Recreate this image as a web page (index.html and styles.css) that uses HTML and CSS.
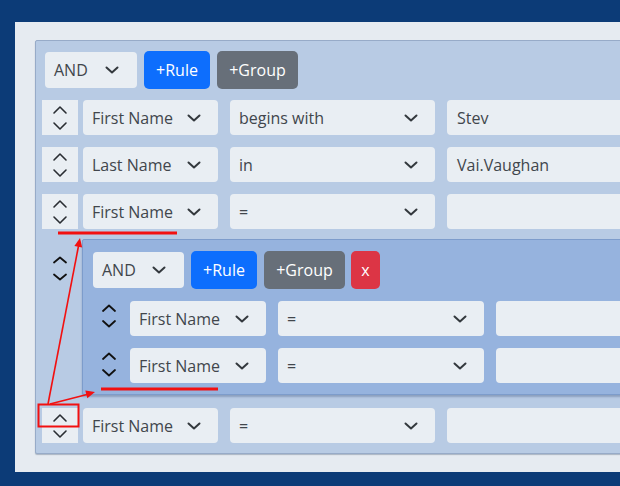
FILE: index.html
```html
<!DOCTYPE html>
<html>
<head>
<meta charset="utf-8">
<link rel="stylesheet" href="styles.css">
</head>
<body>
<div class="card">
  <div class="group">
    <div class="group-header">
      <div class="select combinator"><span>AND</span><svg class="chev" width="14" height="8" viewBox="0 0 14 8"><path d="M1.5 1.5l5.5 5 5.5-5"/></svg></div>
      <button class="btn btn-rule">+Rule</button>
      <button class="btn btn-group">+Group</button>
    </div>
    <div class="rules">
      <div class="rule">
        <div class="handle boxed"><svg width="36" height="35" viewBox="0 0 36 35"><path d="M12 13l6-6 6 6M12 23l6 6 6-6"/></svg></div>
        <div class="fields">
          <div class="select field"><span>First Name</span><svg class="chev" width="14" height="8" viewBox="0 0 14 8"><path d="M1.5 1.5l5.5 5 5.5-5"/></svg></div>
          <div class="select op"><span>begins with</span><svg class="chev" width="14" height="8" viewBox="0 0 14 8"><path d="M1.5 1.5l5.5 5 5.5-5"/></svg></div>
          <div class="value">Stev</div>
        </div>
      </div>
      <div class="rule">
        <div class="handle boxed"><svg width="36" height="35" viewBox="0 0 36 35"><path d="M12 13l6-6 6 6M12 23l6 6 6-6"/></svg></div>
        <div class="fields">
          <div class="select field"><span>Last Name</span><svg class="chev" width="14" height="8" viewBox="0 0 14 8"><path d="M1.5 1.5l5.5 5 5.5-5"/></svg></div>
          <div class="select op"><span>in</span><svg class="chev" width="14" height="8" viewBox="0 0 14 8"><path d="M1.5 1.5l5.5 5 5.5-5"/></svg></div>
          <div class="value">Vai.Vaughan</div>
        </div>
      </div>
      <div class="rule">
        <div class="handle boxed"><svg width="36" height="35" viewBox="0 0 36 35"><path d="M12 13l6-6 6 6M12 23l6 6 6-6"/></svg></div>
        <div class="fields">
          <div class="select field"><span>First Name</span><svg class="chev" width="14" height="8" viewBox="0 0 14 8"><path d="M1.5 1.5l5.5 5 5.5-5"/></svg></div>
          <div class="select op"><span>=</span><svg class="chev" width="14" height="8" viewBox="0 0 14 8"><path d="M1.5 1.5l5.5 5 5.5-5"/></svg></div>
          <div class="value"></div>
        </div>
      </div>
      <div class="group-row">
        <div class="handle group-handle"><svg width="36" height="38" viewBox="0 0 36 38"><path d="M12 11.5l6-5 6 5M12 23.5l6 5 6-5"/></svg></div>
        <div class="group nested">
          <div class="group-header">
            <div class="select combinator"><span>AND</span><svg class="chev" width="14" height="8" viewBox="0 0 14 8"><path d="M1.5 1.5l5.5 5 5.5-5"/></svg></div>
            <button class="btn btn-rule">+Rule</button>
            <button class="btn btn-group">+Group</button>
            <button class="btn btn-remove">x</button>
          </div>
          <div class="rules">
            <div class="rule">
              <div class="handle plain"><svg width="32" height="35" viewBox="0 0 32 35"><path d="M10 10l6-5.5 6 5.5M10 20l6 5.5 6-5.5"/></svg></div>
              <div class="fields">
                <div class="select field"><span>First Name</span><svg class="chev" width="14" height="8" viewBox="0 0 14 8"><path d="M1.5 1.5l5.5 5 5.5-5"/></svg></div>
                <div class="select op"><span>=</span><svg class="chev" width="14" height="8" viewBox="0 0 14 8"><path d="M1.5 1.5l5.5 5 5.5-5"/></svg></div>
                <div class="value"></div>
              </div>
            </div>
            <div class="rule">
              <div class="handle plain"><svg width="32" height="35" viewBox="0 0 32 35"><path d="M10 11l6-5.5 6 5.5M10 22l6 5.5 6-5.5"/></svg></div>
              <div class="fields">
                <div class="select field"><span>First Name</span><svg class="chev" width="14" height="8" viewBox="0 0 14 8"><path d="M1.5 1.5l5.5 5 5.5-5"/></svg></div>
                <div class="select op"><span>=</span><svg class="chev" width="14" height="8" viewBox="0 0 14 8"><path d="M1.5 1.5l5.5 5 5.5-5"/></svg></div>
                <div class="value"></div>
              </div>
            </div>
          </div>
        </div>
      </div>
      <div class="rule">
        <div class="handle boxed"><svg width="36" height="35" viewBox="0 0 36 35"><path d="M12 13l6-6 6 6M12 23l6 6 6-6"/></svg></div>
        <div class="fields">
          <div class="select field"><span>First Name</span><svg class="chev" width="14" height="8" viewBox="0 0 14 8"><path d="M1.5 1.5l5.5 5 5.5-5"/></svg></div>
          <div class="select op"><span>=</span><svg class="chev" width="14" height="8" viewBox="0 0 14 8"><path d="M1.5 1.5l5.5 5 5.5-5"/></svg></div>
          <div class="value"></div>
        </div>
      </div>
    </div>
  </div>
</div>
<svg class="annot" width="620" height="486" viewBox="0 0 620 486">
  <line x1="58" y1="233" x2="177" y2="233" class="mark"/>
  <line x1="101" y1="389" x2="218" y2="389" class="mark"/>
  <rect x="38.5" y="404.5" width="40" height="22" class="box"/>
  <line x1="48" y1="404" x2="78.5" y2="246" class="arrow"/>
  <polygon points="80,238 82.2,247.6 74.4,246.1" class="head"/>
  <line x1="50" y1="404" x2="87" y2="394.5" class="arrow"/>
  <polygon points="95,392 87.3,398.2 85.3,390.4" class="head"/>
</svg>
</body>
</html>
```

FILE: styles.css
```css
html, body {
  margin: 0;
  padding: 0;
}
body {
  background: #0c3b77;
  width: 620px;
  height: 486px;
  overflow: hidden;
  position: relative;
  font-family: "Open Sans", "Noto Sans", "Liberation Sans", sans-serif;
  font-size: 16px;
  color: #41464c;
}
.card {
  margin: 22px 0 0 15px;
  width: 605px;
  height: 450px;
  overflow: hidden;
  box-sizing: border-box;
  background: #e6ebf1;
  padding: 18px 0 0 20px;
}
.group {
  background: #b8cbe4;
  border: 1px solid #97abc8;
  box-shadow: 0 1px 1px rgba(60, 80, 110, 0.35);
  padding: 10px 0 10px 6px;
  border-radius: 2px;
}
.card > .group {
  width: 700px;
}
.group-header {
  display: flex;
  align-items: center;
  gap: 7px;
  margin-left: 3px;
  height: 38px;
}
.select {
  display: flex;
  align-items: center;
  justify-content: space-between;
  box-sizing: border-box;
  height: 35px;
  background: #e9eef3;
  border-radius: 4px;
  padding: 0 17px 0 9px;
}
.chev {
  flex: none;
}
.chev path {
  fill: none;
  stroke: #33383d;
  stroke-width: 2;
  stroke-linecap: round;
  stroke-linejoin: round;
}
.combinator {
  width: 92px;
  height: 36px;
  padding-right: 18px;
}
.btn {
  height: 38px;
  border: none;
  border-radius: 5px;
  color: #fff;
  font-family: inherit;
  font-size: 16px;
  padding: 0;
}
.btn-rule {
  background: #0d6efd;
  width: 66px;
}
.btn-group {
  background: #676f79;
  width: 81px;
}
.btn-remove {
  background: #dc3545;
  width: 29px;
  margin-left: -1px;
}
.rules {
  display: flex;
  flex-direction: column;
  gap: 12px;
  margin-top: 11px;
}
.rule {
  display: flex;
  gap: 5px;
  height: 35px;
}
.handle {
  flex: none;
  width: 36px;
  height: 35px;
}
.handle svg {
  display: block;
}
.handle path {
  fill: none;
  stroke: #2a2e33;
  stroke-width: 1.6;
  stroke-linecap: round;
  stroke-linejoin: round;
}
.boxed {
  background: #e9eef3;
}
.plain {
  width: 32px;
}
.plain path,
.group-handle path {
  stroke: #111;
  stroke-width: 1.8;
}
.fields {
  display: flex;
  gap: 12px;
  flex: 1;
}
.field {
  width: 135px;
}
.op {
  width: 205px;
}
.value {
  flex: 1;
  height: 35px;
  box-sizing: border-box;
  background: #e9eef3;
  border-radius: 4px;
  padding-left: 10px;
  display: flex;
  align-items: center;
}
.group-row {
  display: flex;
  gap: 4px;
  margin-top: -2px;
  margin-bottom: 1px;
}
.group-handle {
  height: 38px;
  margin-top: 12px;
}
.nested {
  flex: 1;
  background: #96b3de;
  border: 1px solid #7d9ccb;
  box-shadow: 0 2px 2px rgba(60, 80, 120, 0.35);
  padding: 11px 0 11px 10px;
}
.nested .group-header {
  margin-left: 0;
}
.nested .combinator {
  width: 91px;
}
.nested .field {
  width: 136px;
}
.nested .op {
  width: 206px;
}
.nested .rules {
  margin-top: 12px;
}
.annot {
  position: absolute;
  left: 0;
  top: 0;
  pointer-events: none;
}
.mark {
  stroke: #f21010;
  stroke-width: 3;
}
.box {
  fill: none;
  stroke: #f21010;
  stroke-width: 2;
}
.arrow {
  stroke: #f21010;
  stroke-width: 1.6;
}
.head {
  fill: #f21010;
}
```
